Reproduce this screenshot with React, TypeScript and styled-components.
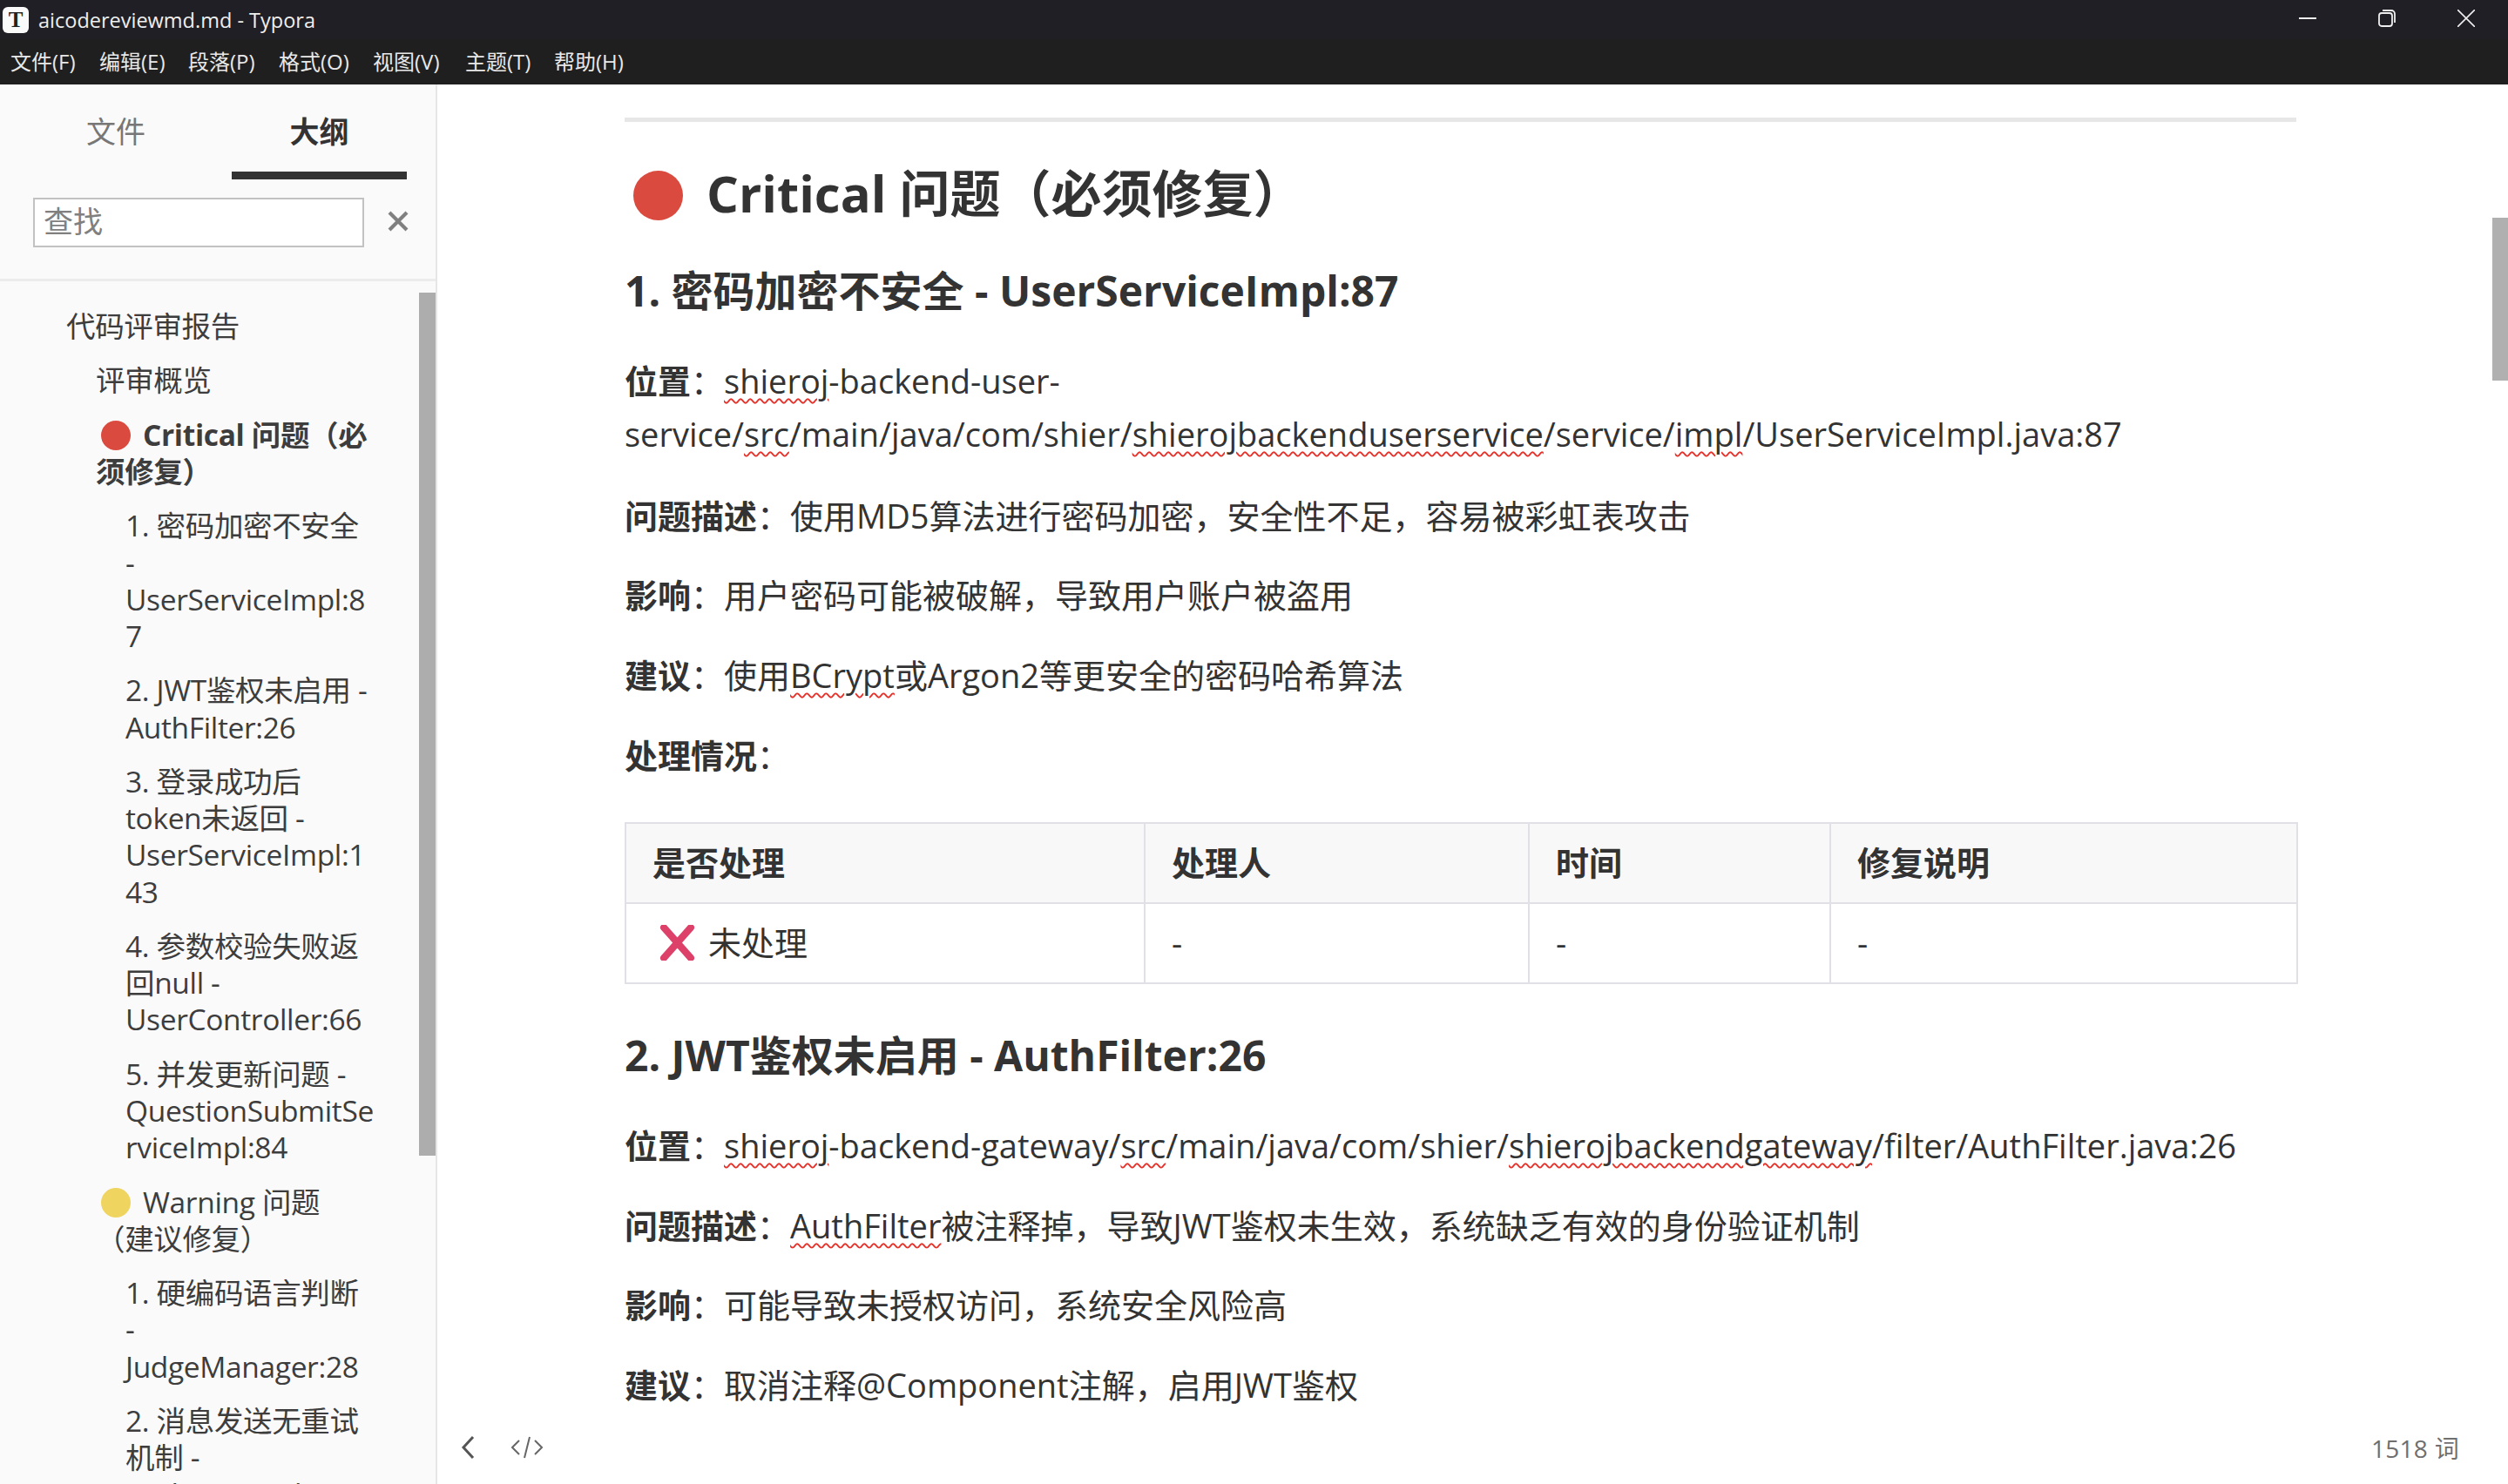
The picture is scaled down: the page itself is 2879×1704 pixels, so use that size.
import React from "react";
import styled, { createGlobalStyle } from "styled-components";

const UI_FONT = `"Open Sans", "Noto Sans CJK SC", sans-serif`;

const Global = createGlobalStyle`
  html, body { margin: 0; padding: 0; width: 100%; height: 100%; overflow: hidden; background: #fff; }
  #root { width: 2879px; height: 1704px; }
  * { box-sizing: border-box; }
`;

const Window = styled.div`
  width: 2879px;
  height: 1704px;
  display: flex;
  flex-direction: column;
  overflow: hidden;
  font-family: ${UI_FONT};
  color: #333;
`;

const TitleBar = styled.header`
  height: 45px;
  background: #211f26;
  display: flex;
  align-items: center;
  padding-left: 3px;
  color: #eee;
  font-size: 23.5px;
  flex: none;
`;

const AppIcon = styled.span`
  width: 30px;
  height: 30px;
  border-radius: 6px;
  background: #fafafa;
  color: #222;
  font-family: "Liberation Serif", serif;
  font-size: 25px;
  font-weight: 700;
  display: flex;
  align-items: center;
  justify-content: center;
  margin-right: 11px;
`;

const TitleText = styled.span`
  flex: 1;
`;

const WindowButtons = styled.div`
  display: flex;
  align-items: center;
  margin-top: -4px;
  padding-right: 38px;
  gap: 71px;
`;

const MenuBar = styled.nav`
  height: 52px;
  background: #1f1f1f;
  display: flex;
  align-items: center;
  padding: 0 0 3px 12px;
  flex: none;
`;

const MenuItem = styled.span`
  color: #e8e8e8;
  font-size: 24px;
  width: ${(p: { $w: number }) => p.$w}px;
  white-space: nowrap;
`;

const Workspace = styled.div`
  flex: 1;
  display: flex;
  min-height: 0;
`;

const Sidebar = styled.aside`
  width: 502px;
  flex: none;
  background: #fafafa;
  border-right: 2px solid #e6e6e6;
  display: flex;
  flex-direction: column;
`;

const Tabs = styled.div`
  display: flex;
  height: 109px;
  padding: 31px 33px 0 0;
  flex: none;
`;

const Tab = styled.div<{ $active?: boolean }>`
  width: ${(p) => (p.$active ? "201px" : "266px")};
  height: 78px;
  text-align: center;
  padding-right: ${(p) => (p.$active ? "0" : "0")};
  font-size: 34px;
  line-height: 46px;
  font-weight: ${(p) => (p.$active ? 700 : 400)};
  color: ${(p) => (p.$active ? "#333" : "#777")};
  border-bottom: ${(p) => (p.$active ? "9px solid #333" : "none")};
`;

const SearchRow = styled.div`
  display: flex;
  align-items: flex-start;
  padding: 21px 0 0 38px;
  height: 117px;
  border-bottom: 3px solid #ececec;
  flex: none;
`;

const SearchBox = styled.div`
  width: 380px;
  height: 57px;
  background: #fff;
  border: 2px solid #c2c2c2;
  padding-left: 10px;
  font-size: 34px;
  line-height: 50px;
  color: #808080;
`;

const SearchClose = styled.svg`
  width: 24px;
  height: 24px;
  margin: 15px 0 0 27px;
`;

const SidebarBody = styled.div`
  flex: 1;
  min-height: 0;
  display: flex;
  overflow: hidden;
`;

const Outline = styled.ul`
  flex: 1;
  min-width: 0;
  margin: 0;
  padding: 30px 51px 0 0;
  list-style: none;
  font-size: 33.5px;
  line-height: 42.2px;
  color: #3d3d3d;
  letter-spacing: -0.35px;
`;

const OutlineItem = styled.li<{ $level: number; $bold?: boolean }>`
  margin: 0 0 20.2px;
  padding-left: ${(p) => 76 + (p.$level - 1) * 34}px;
  font-weight: ${(p) => (p.$bold ? 700 : 400)};
  overflow-wrap: break-word;
`;

const OutlineDot = styled.span<{ $color: string }>`
  display: inline-block;
  width: 34px;
  height: 34px;
  border-radius: 50%;
  background: ${(p) => p.$color};
  margin: 0 14px 0 6px;
  vertical-align: -5px;
`;

const SidebarThumb = styled.div`
  width: 19px;
  height: 991px;
  margin-top: 13px;
  background: #adadad;
  flex: none;
`;

const Main = styled.main`
  flex: 1;
  min-width: 0;
  position: relative;
  display: flex;
  background: #fff;
  overflow: hidden;
`;

const Page = styled.div`
  width: 2359px;
  flex: none;
  padding: 38px 0 0 215px;
  font-size: 38px;
  line-height: 60.8px;
  overflow: hidden;
`;

const Column = styled.article`
  width: 1919px;
`;

const Rule = styled.hr`
  height: 5px;
  margin: 0;
  border: 0;
  background: #e7e7e7;
`;

const H2 = styled.h2`
  margin: 40px 0 0;
  font-size: 58px;
  line-height: 84px;
  font-weight: 700;
  white-space: nowrap;
`;

const H2Dot = styled.span`
  display: inline-block;
  width: 57px;
  height: 57px;
  border-radius: 50%;
  background: #db4a3f;
  margin: 0 27px 0 10px;
  vertical-align: -9px;
`;

const H3 = styled.h3<{ $top: number }>`
  margin: ${(p) => p.$top}px 0 0;
  font-size: 48px;
  line-height: 72px;
  font-weight: 700;
  white-space: nowrap;
`;

const P = styled.p<{ $top?: number }>`
  margin: ${(p) => p.$top ?? 31}px 0 0;
`;

const Typo = styled.span`
  text-decoration: underline wavy #e5322a;
  text-decoration-thickness: 2px;
  text-underline-offset: 5px;
`;

const Table = styled.table`
  width: 1919px;
  margin-top: 46px;
  border-collapse: collapse;
  table-layout: fixed;
`;

const Th = styled.th<{ $w: number }>`
  width: ${(p) => p.$w}px;
  height: 92px;
  padding: 0 30px;
  text-align: left;
  background: #f8f8f8;
  border: 2px solid #e0e0e6;
  font-weight: 700;
`;

const Td = styled.td`
  height: 92px;
  padding: 0 30px;
  border: 2px solid #e0e0e6;
`;

const CrossIcon = styled.svg`
  width: 41px;
  height: 41px;
  margin: 0 15px 0 8px;
  vertical-align: -6px;
`;

const PageThumb = styled.div`
  position: absolute;
  top: 153px;
  right: 0;
  width: 18px;
  height: 187px;
  background: #b0b0b0;
`;

const Footer = styled.footer`
  position: absolute;
  left: 0;
  right: 0;
  bottom: 0;
  height: 84px;
  background: #fff;
  display: flex;
  align-items: center;
  padding: 0 56px 0 26px;
  color: #6f6f6f;
  font-size: 28px;
`;

const FooterIcon = styled.svg<{ $w: number; $right: number }>`
  width: ${(p) => p.$w}px;
  height: 30px;
  margin-right: ${(p) => p.$right}px;
`;

const WordCount = styled.span`
  margin-left: auto;
  letter-spacing: 0.3px;
`;

const menus: [string, number][] = [
  ["文件(F)", 102],
  ["编辑(E)", 102],
  ["段落(P)", 104],
  ["格式(O)", 108],
  ["视图(V)", 106],
  ["主题(T)", 102],
  ["帮助(H)", 90],
];

const outline: { level: number; text: React.ReactNode; bold?: boolean }[] = [
  { level: 1, text: "代码评审报告" },
  { level: 2, text: "评审概览" },
  {
    level: 2,
    bold: true,
    text: (
      <>
        <OutlineDot $color="#db4a3f" />
        Critical 问题（必须修复）
      </>
    ),
  },
  { level: 3, text: "1. 密码加密不安全 - UserServiceImpl:87" },
  { level: 3, text: "2. JWT鉴权未启用 - AuthFilter:26" },
  { level: 3, text: "3. 登录成功后token未返回 - UserServiceImpl:143" },
  { level: 3, text: "4. 参数校验失败返回null - UserController:66" },
  { level: 3, text: "5. 并发更新问题 - QuestionSubmitServiceImpl:84" },
  {
    level: 2,
    text: (
      <>
        <OutlineDot $color="#efd45f" />
        Warning 问题（建议修复）
      </>
    ),
  },
  { level: 3, text: "1. 硬编码语言判断 - JudgeManager:28" },
  { level: 3, text: "2. 消息发送无重试机制 - CodeMqProducer" },
];

export default function App() {
  return (
    <Window>
      <Global />
      <TitleBar>
        <AppIcon>T</AppIcon>
        <TitleText>aicodereviewmd.md - Typora</TitleText>
        <WindowButtons>
          <svg width="20" height="20" viewBox="0 0 20 20">
            <path d="M0 10h20" stroke="#eee" strokeWidth="2" />
          </svg>
          <svg width="20" height="20" viewBox="0 0 20 20" fill="none" stroke="#eee" strokeWidth="1.8">
            <rect x="1" y="4" width="15" height="15" rx="3" />
            <path d="M5 1h10a4 4 0 0 1 4 4v10" />
          </svg>
          <svg width="20" height="20" viewBox="0 0 20 20" fill="none" stroke="#eee" strokeWidth="1.6">
            <path d="M0 0l20 20M20 0L0 20" />
          </svg>
        </WindowButtons>
      </TitleBar>
      <MenuBar>
        {menus.map(([label, w]) => (
          <MenuItem key={label} $w={w}>
            {label}
          </MenuItem>
        ))}
      </MenuBar>
      <Workspace>
        <Sidebar>
          <Tabs>
            <Tab>文件</Tab>
            <Tab $active>大纲</Tab>
          </Tabs>
          <SearchRow>
            <SearchBox>查找</SearchBox>
            <SearchClose viewBox="0 0 24 24">
              <path d="M2 2l20 20M22 2L2 22" stroke="#808080" strokeWidth="4.2" fill="none" />
            </SearchClose>
          </SearchRow>
          <SidebarBody>
            <Outline>
              {outline.map((item, i) => (
                <OutlineItem key={i} $level={item.level} $bold={item.bold}>
                  {item.text}
                </OutlineItem>
              ))}
            </Outline>
            <SidebarThumb />
          </SidebarBody>
        </Sidebar>
        <Main>
          <Page>
            <Column>
              <Rule />
              <H2>
                <H2Dot />
                Critical 问题（必须修复）
              </H2>
              <H3 $top={34}>1. 密码加密不安全 - UserServiceImpl:87</H3>
              <P $top={37}>
                <strong>位置</strong>：<Typo>shieroj</Typo>-backend-user-service/<Typo>src</Typo>/main/java/com/shier/
                <Typo>shierojbackenduserservice</Typo>/service/<Typo>impl</Typo>/UserServiceImpl.java:87
              </P>
              <P $top={33}>
                <strong>问题描述</strong>：使用MD5算法进行密码加密，安全性不足，容易被彩虹表攻击
              </P>
              <P>
                <strong>影响</strong>：用户密码可能被破解，导致用户账户被盗用
              </P>
              <P>
                <strong>建议</strong>：使用<Typo>BCrypt</Typo>或Argon2等更安全的密码哈希算法
              </P>
              <P>
                <strong>处理情况</strong>：
              </P>
              <Table>
                <thead>
                  <tr>
                    <Th $w={596}>是否处理</Th>
                    <Th $w={441}>处理人</Th>
                    <Th $w={346}>时间</Th>
                    <Th $w={536}>修复说明</Th>
                  </tr>
                </thead>
                <tbody>
                  <tr>
                    <Td>
                      <CrossIcon viewBox="0 0 41 41">
                        <path d="M5 3l31 35M36 3L5 38" stroke="#dd4068" strokeWidth="8" strokeLinecap="round" fill="none" />
                      </CrossIcon>
                      未处理
                    </Td>
                    <Td>-</Td>
                    <Td>-</Td>
                    <Td>-</Td>
                  </tr>
                </tbody>
              </Table>
              <H3 $top={46}>2. JWT鉴权未启用 - AuthFilter:26</H3>
              <P $top={37}>
                <strong>位置</strong>：<Typo>shieroj</Typo>-backend-gateway/<Typo>src</Typo>/main/java/com/shier/
                <Typo>shierojbackendgateway</Typo>/filter/AuthFilter.java:26
              </P>
              <P>
                <strong>问题描述</strong>：<Typo>AuthFilter</Typo>被注释掉，导致JWT鉴权未生效，系统缺乏有效的身份验证机制
              </P>
              <P>
                <strong>影响</strong>：可能导致未授权访问，系统安全风险高
              </P>
              <P>
                <strong>建议</strong>：取消注释@Component注解，启用JWT鉴权
              </P>
            </Column>
          </Page>
          <PageThumb />
          <Footer>
            <FooterIcon $w={18} $right={40} viewBox="0 0 18 30">
              <path d="M15 3L4 15l11 12" stroke="#555" strokeWidth="3" fill="none" />
            </FooterIcon>
            <FooterIcon $w={38} $right={0} viewBox="0 0 38 30">
              <path d="M10 7l-8 8 8 8M28 7l8 8-8 8M22 3l-6 24" stroke="#666" strokeWidth="2" fill="none" />
            </FooterIcon>
            <WordCount>1518 词</WordCount>
          </Footer>
        </Main>
      </Workspace>
    </Window>
  );
}
